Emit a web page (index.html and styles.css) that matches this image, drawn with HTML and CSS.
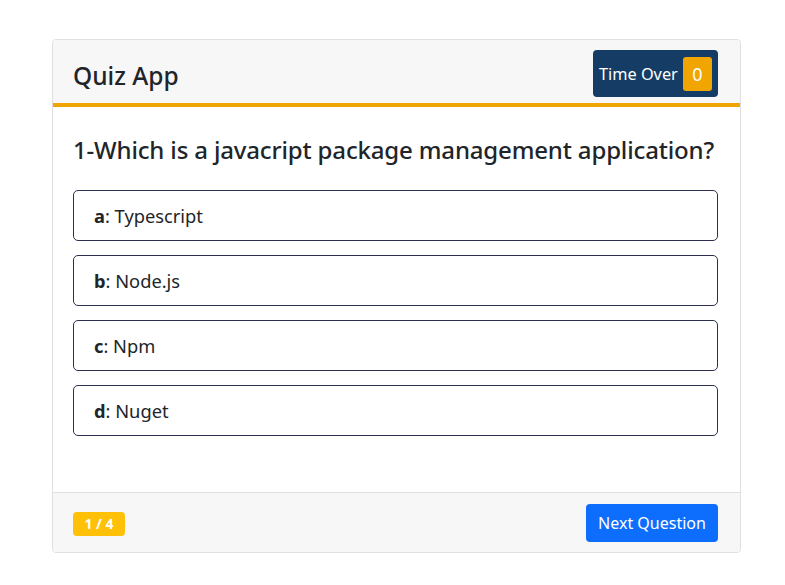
FILE: index.html
```html
<!DOCTYPE html>
<html>
<head>
<meta charset="utf-8">
<link rel="stylesheet" href="styles.css">
</head>
<body>
<div class="card">
  <div class="card-header">
    <h4 class="title">Quiz App</h4>
    <div class="timer"><span class="timer-label">Time Over</span><span class="timer-count">0</span></div>
  </div>
  <div class="card-body">
    <h4 class="question">1-Which is a javacript package management application?</h4>
    <ul class="options">
      <li class="option"><b>a</b>: Typescript</li>
      <li class="option"><b>b</b>: Node.js</li>
      <li class="option"><b>c</b>: Npm</li>
      <li class="option"><b>d</b>: Nuget</li>
    </ul>
  </div>
  <div class="card-footer">
    <span class="badge">1 / 4</span>
    <button class="btn-next">Next Question</button>
  </div>
</div>
</body>
</html>
```
FILE: styles.css
```css
* { box-sizing: border-box; }
body {
  margin: 0;
  font-family: "Noto Sans", "Open Sans", sans-serif;
  color: #212529;
  background: #fff;
}
.card {
  margin: 39px 44px 0 52px;
  border: 1px solid #dfdfdf;
  border-radius: 4px;
  overflow: hidden;
}
.card-header {
  background: #f7f7f7;
  border-bottom: 4px solid #f0a500;
  height: 67px;
  padding: 10px 22px 0 20px;
  display: flex;
  justify-content: space-between;
  align-items: flex-start;
}
.title {
  margin: 0;
  font-size: 24.5px;
  font-weight: 500;
  line-height: 52px;
}
.timer {
  background: #153c64;
  border-radius: 4px;
  width: 125px;
  height: 47px;
  padding: 0 6px;
  display: flex;
  align-items: center;
  justify-content: space-between;
  color: #fff;
  font-size: 16.3px;
}
.timer-count {
  background: #f0a500;
  border-radius: 3px;
  width: 29px;
  height: 34px;
  display: flex;
  align-items: center;
  justify-content: center;
  font-size: 18px;
}
.card-body {
  padding: 24px 22px 56px 20px;
}
.question {
  margin: 0 0 21px;
  font-size: 24px;
  font-weight: 500;
  line-height: 38px;
  white-space: nowrap;
  letter-spacing: -0.16px;
}
.options {
  list-style: none;
  margin: 0;
  padding: 0;
  display: flex;
  flex-direction: column;
  gap: 14px;
}
.option {
  height: 51px;
  border: 1px solid #2d2f4e;
  border-radius: 5px;
  padding: 0 20px;
  display: flex;
  align-items: center;
  font-size: 18.3px;
}
.option b { font-weight: 700; }
.card-footer {
  background: #f7f7f7;
  border-top: 1px solid #dfdfdf;
  height: 60px;
  padding: 0 22px 0 20px;
  display: flex;
  justify-content: space-between;
  align-items: center;
}
.badge {
  background: #ffc107;
  color: #fff;
  font-weight: 700;
  font-size: 14px;
  border-radius: 4px;
  width: 52px;
  height: 24px;
  display: flex;
  align-items: center;
  justify-content: center;
  margin-top: 2px;
}
.btn-next {
  background: #0d6efd;
  color: #fff;
  border: none;
  border-radius: 4px;
  height: 38px;
  width: 132px;
  font-family: inherit;
  font-size: 16px;
}
```
